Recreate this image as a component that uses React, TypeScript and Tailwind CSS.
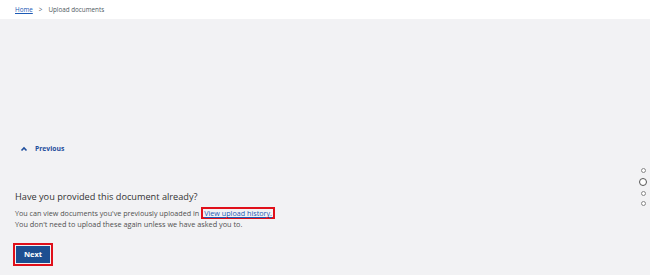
import React from 'react';

const font = { fontFamily: '"Open Sans", "Noto Sans", Arial, sans-serif' };

const Dot = ({ big }: { big?: boolean }) => (
  <span
    className={
      big
        ? 'block w-[8px] h-[8px] rounded-full border border-[#555] bg-white'
        : 'block w-[5px] h-[5px] rounded-full border border-[#888] bg-white'
    }
  />
);

export default function App() {
  return (
    <div className="w-[650px] h-[275px] flex flex-col bg-[#f2f2f4] text-[#333]" style={font}>
      {/* Breadcrumb */}
      <div className="h-[19px] bg-white flex items-center pl-[15px] gap-[6px] text-[6.3px] text-[#505a5f]">
        <a className="text-[#1d5ab5] underline">Home</a>
        <span>&gt;</span>
        <span>Upload documents</span>
      </div>

      <div className="flex-1 flex">
        {/* Main content */}
        <div className="flex-1 flex flex-col pl-[15px] pt-[125px]">
          <div className="flex items-center gap-[7px] pl-[5px] text-[6.8px] font-bold text-[#1f4e9d] h-[10px]">
            <svg width="8" height="6" viewBox="0 0 8 6">
              <path d="M1.5 4.5 L4 2 L6.5 4.5" fill="none" stroke="#1f4e9d" strokeWidth="1.6" />
            </svg>
            <span>Previous</span>
          </div>

          <h2 className="mt-[37px] text-[9.2px] leading-[12px] text-[#333]">Have you provided this document already?</h2>
          <p className="mt-[4px] text-[7.2px] leading-[11px] text-[#505050]">
            You can view documents you've previously uploaded in
            <a className="inline-block ml-[2px] border-2 border-[#e0101a] px-[1px] leading-[8px] text-[#1d5ab5] underline">View upload history.</a>
          </p>
          <p className="text-[7.3px] leading-[10px] text-[#505050]">You don't need to upload these again unless we have asked you to.</p>

          <div className="mt-[10px]">
            <span className="inline-block border-2 border-[#e0101a] p-[1px] -ml-[2px]">
              <button className="block w-[34px] h-[17px] bg-[#1d4f91] text-white text-[7.5px] font-bold">Next</button>
            </span>
          </div>
        </div>

        {/* Page dots */}
        <div className="w-[12px] flex flex-col items-center gap-[5px] pt-[149px] pr-[2px]">
          <Dot />
          <Dot big />
          <Dot />
          <Dot />
        </div>
      </div>
    </div>
  );
}
